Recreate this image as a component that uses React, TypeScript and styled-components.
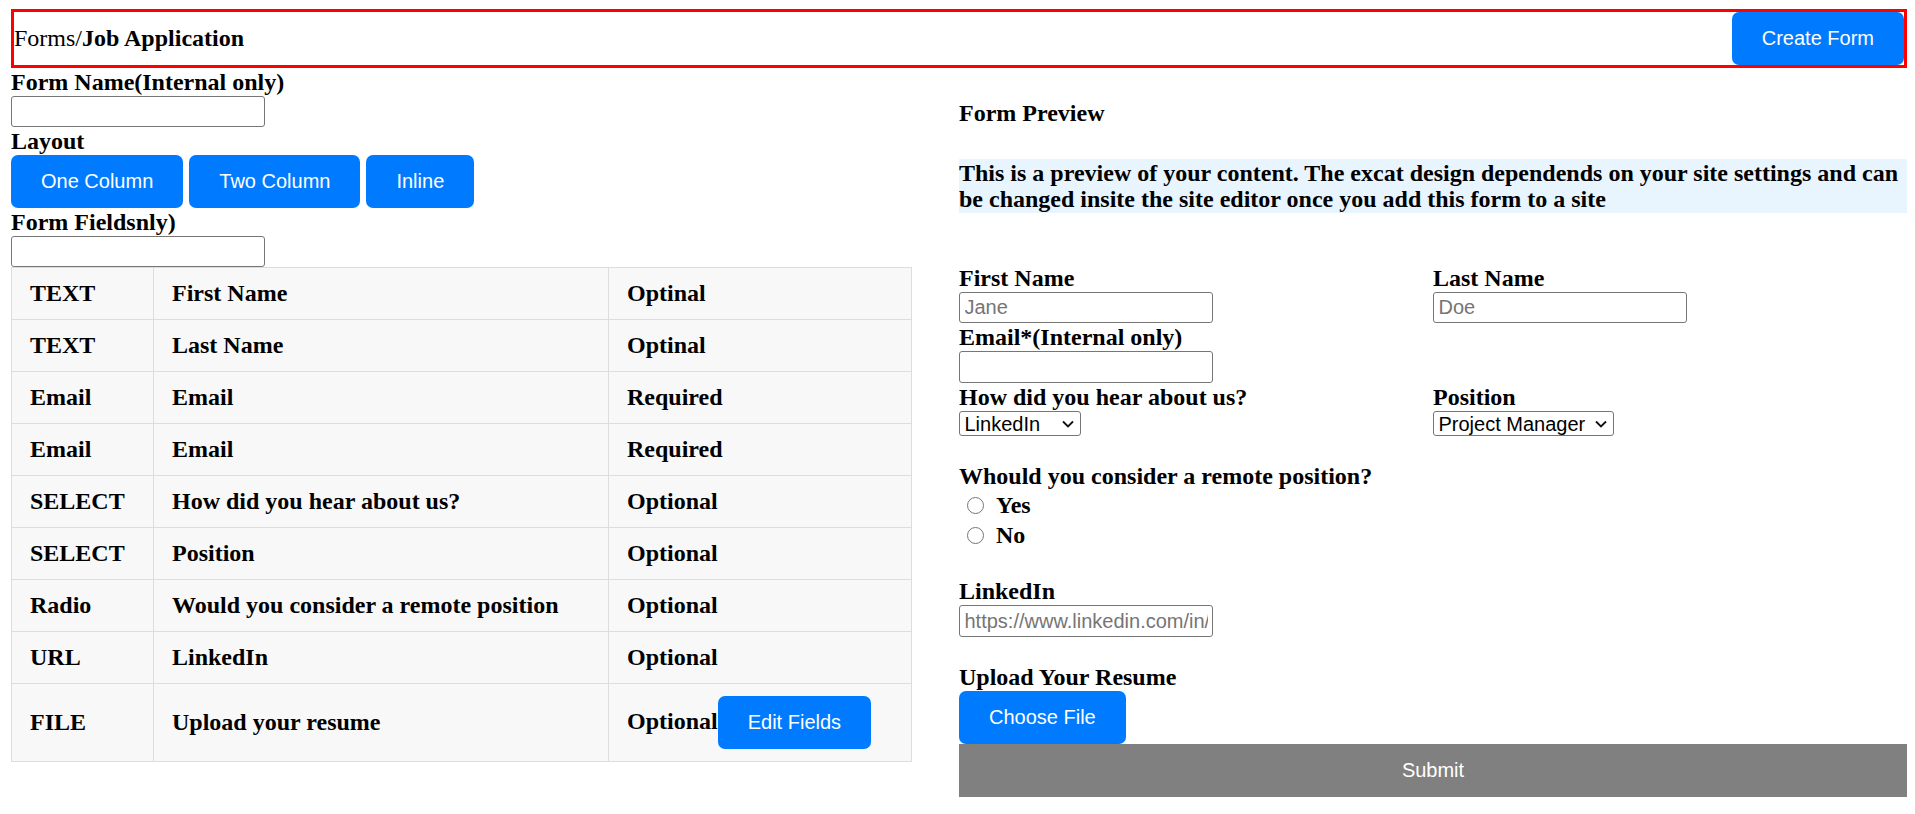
import React from "react";
import styled, { createGlobalStyle } from "styled-components";

const GlobalStyle = createGlobalStyle`
  html, body {
    margin: 0;
    padding: 0;
    background: #ffffff;
  }
  body {
    font-family: "Liberation Serif", "Times New Roman", serif;
    color: #000000;
  }
  * {
    box-sizing: border-box;
  }
`;

const SANS = `"Liberation Sans", Arial, sans-serif`;

const Page = styled.div`
  padding: 9px 8px 0 11px;
`;

const Header = styled.header`
  display: flex;
  align-items: center;
  justify-content: space-between;
  border: 3px solid #ff0000;
`;

const Breadcrumb = styled.div`
  font-size: 24px;
  line-height: 27.5px;
  font-weight: 400;
  b {
    font-weight: 700;
  }
`;

const PrimaryButton = styled.button`
  display: inline-block;
  height: 52.5px;
  padding: 0 30px;
  border: none;
  border-radius: 7px;
  background: #007bff;
  color: #ffffff;
  font-family: ${SANS};
  font-size: 20px;
  line-height: 52.5px;
  white-space: nowrap;
  cursor: pointer;
  vertical-align: baseline;
`;

const Main = styled.main`
  display: grid;
  grid-template-columns: 1fr 1fr;
  align-items: start;
`;

const Column = styled.section`
  display: flex;
  flex-direction: column;
  align-items: flex-start;
  min-width: 0;
`;

const FieldLabel = styled.label`
  display: block;
  font-size: 24px;
  font-weight: 700;
  line-height: 28px;
`;

const TextInput = styled.input<{ $width?: number }>`
  display: block;
  width: ${(p) => p.$width ?? 254}px;
  height: 31.5px;
  margin: 0;
  padding: 0 4.5px;
  border: 1.5px solid #767676;
  border-radius: 3px;
  background: #ffffff;
  font-family: ${SANS};
  font-size: 20px;
  color: #000000;
  &::placeholder {
    color: #757575;
  }
`;

const ButtonRow = styled.div`
  display: flex;
  gap: 6px;
`;

const FieldsTable = styled.table`
  width: 900px;
  table-layout: fixed;
  border-collapse: collapse;
  background: #f8f8f8;
`;

const Cell = styled.td`
  border: 1px solid #dddddd;
  padding: 12px 18px;
  font-size: 24px;
  font-weight: 700;
  line-height: 27px;
  text-align: left;
  vertical-align: middle;
  white-space: nowrap;
`;

const PreviewTitle = styled.h4`
  margin: 32px 0;
  font-size: 24px;
  font-weight: 700;
  line-height: 27.5px;
`;

const InfoBox = styled.p`
  align-self: stretch;
  margin: 0;
  padding-top: 0.5px;
  background: #e8f4fe;
  font-size: 24px;
  font-weight: 700;
  line-height: 26.7px;
`;

const PreviewForm = styled.form`
  align-self: stretch;
  display: flex;
  flex-direction: column;
  align-items: flex-start;
  margin-top: 51px;
`;

const TwoColGrid = styled.div`
  align-self: stretch;
  display: grid;
  grid-template-columns: 1fr 1fr;
`;

const Field = styled.div<{ $gapTop?: number }>`
  display: flex;
  flex-direction: column;
  align-items: flex-start;
  margin-top: ${(p) => p.$gapTop ?? 0}px;
`;

const SelectWrap = styled.div`
  position: relative;
`;

const Select = styled.select<{ $width: number }>`
  display: block;
  appearance: none;
  width: ${(p) => p.$width}px;
  height: 25.5px;
  margin: 0;
  padding: 0 24px 0 4.5px;
  border: 1.5px solid #767676;
  border-radius: 3px;
  background: #ffffff;
  font-family: ${SANS};
  font-size: 20px;
  line-height: 22px;
  color: #000000;
`;

const Chevron = styled.svg`
  position: absolute;
  right: 7px;
  top: 9px;
  width: 12px;
  height: 8px;
  pointer-events: none;
`;

const RadioRow = styled.label`
  display: flex;
  align-items: center;
  gap: 11.7px;
  height: 30px;
  padding-left: 8.3px;
  font-size: 24px;
  font-weight: 700;
`;

const Radio = styled.input`
  appearance: none;
  width: 17px;
  height: 17px;
  margin: 0;
  border: 1.5px solid #767676;
  border-radius: 50%;
  background: #ffffff;
`;

const SubmitBar = styled.button`
  align-self: stretch;
  height: 53px;
  border: none;
  border-radius: 0;
  background: #808080;
  color: #ffffff;
  font-family: ${SANS};
  font-size: 20px;
  cursor: pointer;
`;

type Row = { type: string; name: string; status: string };

const rows: Row[] = [
  { type: "TEXT", name: "First Name", status: "Optinal" },
  { type: "TEXT", name: "Last Name", status: "Optinal" },
  { type: "Email", name: "Email", status: "Required" },
  { type: "Email", name: "Email", status: "Required" },
  { type: "SELECT", name: "How did you hear about us?", status: "Optional" },
  { type: "SELECT", name: "Position", status: "Optional" },
  { type: "Radio", name: "Would you consider a remote position", status: "Optional" },
  { type: "URL", name: "LinkedIn", status: "Optional" },
  { type: "FILE", name: "Upload your resume", status: "Optional" },
];

function Dropdown({ width, value, options }: { width: number; value: string; options: string[] }) {
  return (
    <SelectWrap>
      <Select $width={width} defaultValue={value}>
        {options.map((o) => (
          <option key={o}>{o}</option>
        ))}
      </Select>
      <Chevron viewBox="0 0 12 8" aria-hidden="true">
        <path d="M1 1.5 L6 6.5 L11 1.5" fill="none" stroke="#111" strokeWidth="1.8" />
      </Chevron>
    </SelectWrap>
  );
}

export default function App() {
  return (
    <>
      <GlobalStyle />
      <Page>
        <Header>
          <Breadcrumb>
            Forms/<b>Job Application</b>
          </Breadcrumb>
          <PrimaryButton type="button">Create Form</PrimaryButton>
        </Header>
        <Main>
          <Column>
            <FieldLabel>Form Name(Internal only)</FieldLabel>
            <TextInput type="text" />
            <FieldLabel>Layout</FieldLabel>
            <ButtonRow>
              <PrimaryButton type="button">One Column</PrimaryButton>
              <PrimaryButton type="button">Two Column</PrimaryButton>
              <PrimaryButton type="button">Inline</PrimaryButton>
            </ButtonRow>
            <FieldLabel>Form Fieldsnly)</FieldLabel>
            <TextInput type="text" />
            <FieldsTable>
              <colgroup>
                <col style={{ width: 142 }} />
                <col style={{ width: 455 }} />
                <col style={{ width: 303 }} />
              </colgroup>
              <tbody>
                {rows.map((r, i) => (
                  <tr key={i}>
                    <Cell>{r.type}</Cell>
                    <Cell>{r.name}</Cell>
                    <Cell>
                      {r.status}
                      {i === rows.length - 1 && (
                        <PrimaryButton type="button">Edit Fields</PrimaryButton>
                      )}
                    </Cell>
                  </tr>
                ))}
              </tbody>
            </FieldsTable>
          </Column>
          <Column>
            <PreviewTitle>Form Preview</PreviewTitle>
            <InfoBox>
              This is a preview of your content. The excat design dependends on your site
              settings and can be changed insite the site editor once you add this form to a
              site
            </InfoBox>
            <PreviewForm onSubmit={(e) => e.preventDefault()}>
              <TwoColGrid>
                <Field>
                  <FieldLabel>First Name</FieldLabel>
                  <TextInput type="text" placeholder="Jane" />
                </Field>
                <Field>
                  <FieldLabel>Last Name</FieldLabel>
                  <TextInput type="text" placeholder="Doe" />
                </Field>
                <Field>
                  <FieldLabel>Email*(Internal only)</FieldLabel>
                  <TextInput type="email" />
                </Field>
                <div />
                <Field>
                  <FieldLabel>How did you hear about us?</FieldLabel>
                  <Dropdown width={122} value="LinkedIn" options={["LinkedIn", "Indeed", "Referral"]} />
                </Field>
                <Field>
                  <FieldLabel>Position</FieldLabel>
                  <Dropdown
                    width={181}
                    value="Project Manager"
                    options={["Project Manager", "Developer", "Designer"]}
                  />
                </Field>
              </TwoColGrid>
              <Field $gapTop={26}>
                <FieldLabel>Whould you consider a remote position?</FieldLabel>
                <RadioRow>
                  <Radio type="radio" name="remote" />
                  Yes
                </RadioRow>
                <RadioRow>
                  <Radio type="radio" name="remote" />
                  No
                </RadioRow>
              </Field>
              <Field $gapTop={27}>
                <FieldLabel>LinkedIn</FieldLabel>
                <TextInput type="url" placeholder="https://www.linkedin.com/in/" />
              </Field>
              <Field $gapTop={26.5}>
                <FieldLabel>Upload Your Resume</FieldLabel>
                <PrimaryButton type="button">Choose File</PrimaryButton>
              </Field>
              <SubmitBar type="submit">Submit</SubmitBar>
            </PreviewForm>
          </Column>
        </Main>
      </Page>
    </>
  );
}
